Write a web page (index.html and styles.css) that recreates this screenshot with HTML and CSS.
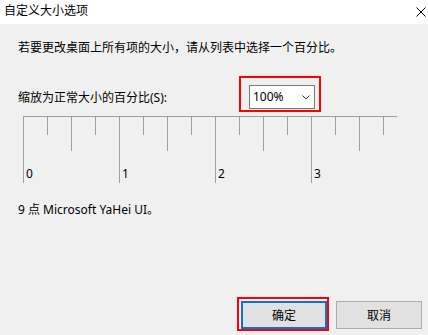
FILE: index.html
```html
<!DOCTYPE html>
<html lang="zh-CN">
<head>
    <meta charset="UTF-8">
    <title>自定义大小选项</title>
    <link rel="stylesheet" href="styles.css">
</head>
<body>

<div class="dialog">
    <div class="titlebar">
        <span class="title">自定义大小选项</span>
        <svg class="close" width="10" height="10" viewBox="0 0 10 10">
            <path d="M0.5 0.5 L9.5 9.5 M9.5 0.5 L0.5 9.5" stroke="#000" stroke-width="1" fill="none"/>
        </svg>
    </div>

    <div class="content">
        <p class="intro">若要更改桌面上所有项的大小，请从列表中选择一个百分比。</p>

        <div class="scale-row">
            <label class="scale-label">缩放为正常大小的百分比(S):</label>
            <div class="mark">
                <div class="combo">
                    <span>100%</span>
                    <svg width="8" height="5" viewBox="0 0 8 5">
                        <path d="M0.5 0.5 L4 4 L7.5 0.5" stroke="#333" stroke-width="1" fill="none"/>
                    </svg>
                </div>
            </div>
        </div>

        <div class="ruler">
            <div class="tick major"><span>0</span></div>
            <div class="tick minor"></div>
            <div class="tick medium"></div>
            <div class="tick minor"></div>
            <div class="tick major"><span>1</span></div>
            <div class="tick minor"></div>
            <div class="tick medium"></div>
            <div class="tick minor"></div>
            <div class="tick major"><span>2</span></div>
            <div class="tick minor"></div>
            <div class="tick medium"></div>
            <div class="tick minor"></div>
            <div class="tick major"><span>3</span></div>
            <div class="tick minor"></div>
            <div class="tick medium"></div>
            <div class="tick minor"></div>
        </div>

        <p class="sample">9 点 Microsoft YaHei UI。</p>
    </div>

    <div class="buttons">
        <div class="mark-ok">
            <button class="btn btn-ok">确定</button>
        </div>
        <button class="btn">取消</button>
    </div>
</div>

</body>
</html>
```

FILE: styles.css
```css
body {
    margin: 0;
    padding: 0;
    font-family: "Noto Sans", "Noto Sans CJK SC", sans-serif;
    font-size: 12px;
    line-height: 16px;
    color: #000;
}
.dialog {
    width: 428px;
    height: 335px;
    background-color: #f0f0f0;
    display: flex;
    flex-direction: column;
}
.titlebar {
    height: 24px;
    background-color: #fff;
    display: flex;
    align-items: flex-start;
    justify-content: space-between;
    padding: 3px 2px 0 4px;
    box-sizing: border-box;
}
.close {
    margin-top: 4px;
}
.content {
    padding: 0 18px;
}
.intro {
    margin: 16px 0 0 0;
}
.scale-row {
    display: flex;
    align-items: flex-start;
    margin-top: 20px;
}
.scale-label {
    width: 221px;
    margin-top: 14px;
}
.mark {
    border: 2px solid #ff0000;
    padding: 7px 4px 1px 8px;
}
.combo {
    width: 66px;
    height: 24px;
    box-sizing: border-box;
    background-color: #fff;
    border: 1px solid #7a7a7a;
    display: flex;
    align-items: center;
    justify-content: space-between;
    padding: 0 4px 0 3px;
}
.ruler {
    width: 374px;
    margin: 4px 0 0 5px;
    border-top: 1px solid #a0a0a0;
    display: flex;
    align-items: flex-start;
    overflow: hidden;
}
.tick {
    flex: 0 0 24px;
    box-sizing: border-box;
    border-left: 1px solid #a0a0a0;
}
.minor {
    height: 18px;
}
.medium {
    height: 34px;
}
.major {
    height: 66px;
    padding: 49px 0 0 2px;
}
.sample {
    margin: 19px 0 0 0;
}
.buttons {
    margin-top: auto;
    display: flex;
    justify-content: flex-end;
    align-items: flex-start;
    padding: 0 6px 4px 0;
}
.mark-ok {
    border: 2px solid #ff0000;
    padding: 2px 0 0 2px;
    margin-right: 7px;
}
.btn {
    width: 86px;
    height: 28px;
    font-family: "Noto Sans", "Noto Sans CJK SC", sans-serif;
    font-size: 12px;
    color: #000;
    background-color: #e1e1e1;
    border: 1px solid #adadad;
    padding: 0;
    margin: 4px 0 0 0;
}
.btn-ok {
    border: 2px solid #0078d7;
    margin: 0;
}
```
